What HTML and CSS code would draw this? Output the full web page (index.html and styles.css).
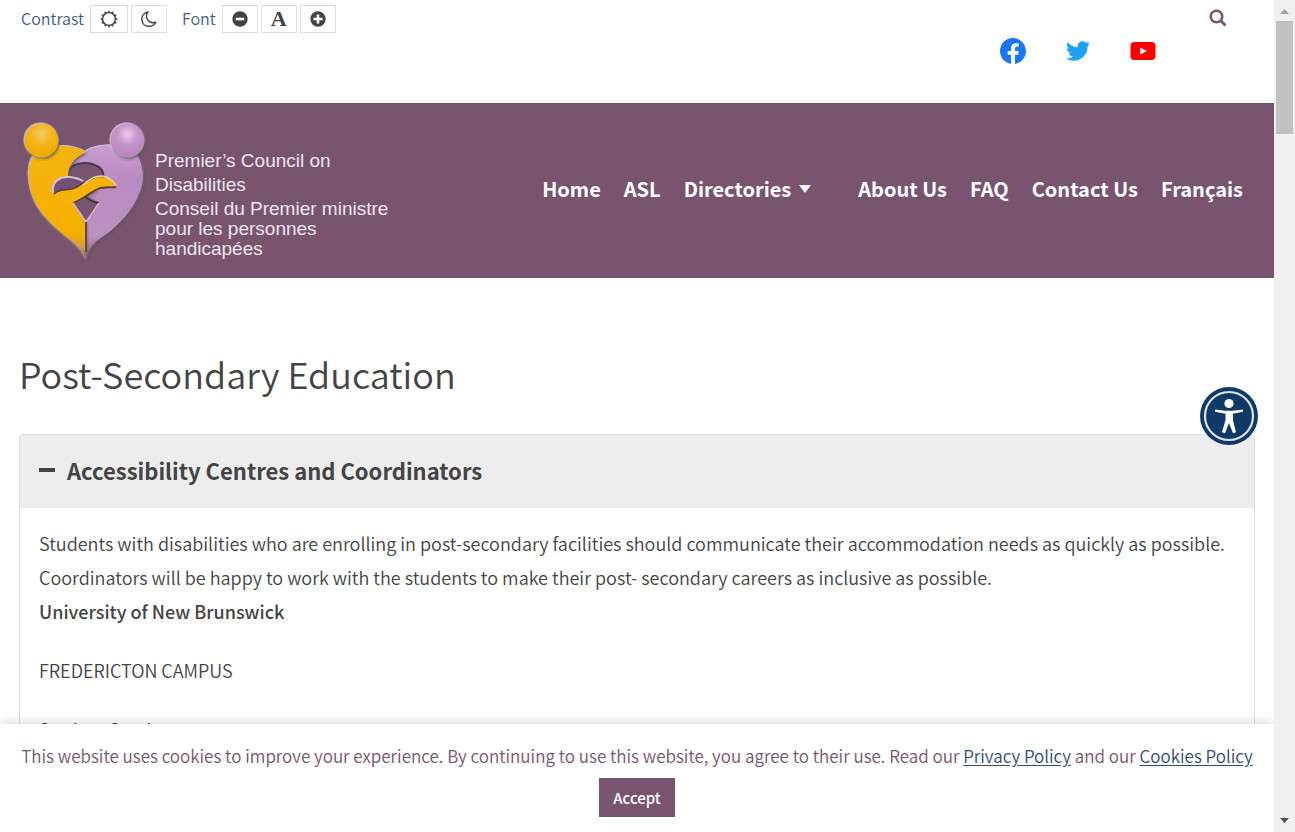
FILE: index.html
```html
<!DOCTYPE html>
<html lang="en">
<head>
<meta charset="utf-8">
<title>Post-Secondary Education</title>
<link rel="stylesheet" href="styles.css">
</head>
<body>
<div class="viewport">
  <div class="page">
    <div class="topbar">
      <div class="tools">
        <div class="tool-group">
          <span class="tool-label">Contrast</span>
          <button class="tool wide" type="button" aria-label="Day mode">
            <svg width="18" height="18" viewBox="0 0 18 18"><path d="M9 0L10.500 2.700H7.500ZM9 18L7.500 15.300H10.500ZM0 9L2.700 7.500V10.500ZM18 9L15.300 10.500V7.500ZM4.500 1.200L7.100 2.600L4.500 4.100ZM13.500 1.200L13.500 4.100L10.900 2.600ZM4.500 16.800L4.500 13.900L7.100 15.400ZM13.500 16.800L10.900 15.400L13.500 13.900ZM1.200 4.500L4.100 4.500L2.600 7.100ZM16.800 4.500L15.400 7.100L13.900 4.500ZM1.200 13.500L2.600 10.900L4.100 13.500ZM16.800 13.500L13.900 13.500L15.400 10.900Z" fill="#444"/><circle cx="9" cy="9" r="6.400" fill="none" stroke="#444" stroke-width="1.400"/></svg>
          </button>
          <button class="tool" type="button" aria-label="Night mode">
            <svg width="18" height="18" viewBox="0 0 18 18"><path d="M8 1.800C3.800 3 1.500 6 1.800 9.800C2.200 14 5.200 16.400 9 16.300C12 16.200 14.500 14.800 15.800 12.200C12 13.300 9.200 12.300 7.600 9.900C6 7.400 6.200 4.300 8 1.800Z" fill="none" stroke="#444" stroke-width="1.400" stroke-linejoin="round"/></svg>
          </button>
        </div>
        <div class="tool-group">
          <span class="tool-label">Font</span>
          <button class="tool" type="button" aria-label="Smaller font">
            <svg width="16" height="16" viewBox="0 0 16 16"><circle cx="8" cy="8" r="7.700" fill="#444"/><path d="M3.800 8h8.400" stroke="#fff" stroke-width="2.600"/></svg>
          </button>
          <button class="tool letter" type="button" aria-label="Default font">A</button>
          <button class="tool" type="button" aria-label="Larger font">
            <svg width="16" height="16" viewBox="0 0 16 16"><circle cx="8" cy="8" r="7.700" fill="#444"/><path d="M3.500 8h9M8 3.500v9" stroke="#fff" stroke-width="2.600"/></svg>
          </button>
        </div>
      </div>
      <div class="social">
        <a href="#" aria-label="Facebook"><svg width="26" height="26" viewBox="0 0 24 24"><path fill="#1877f2" d="M24 12.073c0-6.627-5.373-12-12-12s-12 5.373-12 12c0 5.990 4.388 10.954 10.125 11.854v-8.385H7.078v-3.470h3.047V9.430c0-3.007 1.792-4.669 4.533-4.669 1.312 0 2.686.235 2.686.235v2.953H15.830c-1.491 0-1.956.925-1.956 1.874v2.250h3.328l-.532 3.470h-2.796v8.385C19.612 23.027 24 18.062 24 12.073z"/></svg></a>
        <a href="#" aria-label="Twitter"><svg width="26" height="26" viewBox="0 0 26 26"><path transform="translate(1 1)" fill="#1da1f2" d="M23.953 4.570a10 10 0 01-2.825.775 4.958 4.958 0 002.163-2.723c-.951.555-2.005.959-3.127 1.184a4.920 4.920 0 00-8.384 4.482C7.690 8.095 4.067 6.130 1.640 3.162a4.822 4.822 0 00-.666 2.475c0 1.710.870 3.213 2.188 4.096a4.904 4.904 0 01-2.228-.616v.060a4.923 4.923 0 003.946 4.827 4.996 4.996 0 01-2.212.085 4.936 4.936 0 004.604 3.417 9.867 9.867 0 01-6.102 2.105c-.390 0-.779-.023-1.170-.067a13.995 13.995 0 007.557 2.209c9.053 0 13.998-7.496 13.998-13.985 0-.210 0-.420-.015-.630A9.935 9.935 0 0024 4.590z"/></svg></a>
        <a href="#" aria-label="YouTube"><svg width="26" height="26" viewBox="0 0 26 26"><rect x="0.500" y="4" width="25" height="18" rx="4" fill="#f00"/><path d="M10.300 9.500v7l6.500-3.500z" fill="#fff"/></svg></a>
      </div>
      <button class="search" type="button" aria-label="Search"><svg width="18" height="18" viewBox="0 0 18 18"><circle cx="7.500" cy="7.500" r="5.800" fill="none" stroke="#78546f" stroke-width="2.500"/><path d="M11.500 11.500l5 5" stroke="#78546f" stroke-width="2.800"/></svg></button>
    </div>

    <header class="header">
      <a class="brand" href="#">
        <svg class="brand-mark" width="128" height="142" viewBox="0 0 128 142" aria-hidden="true">
          <defs>
            <radialGradient id="gold" cx=".5" cy=".32" r=".6"><stop offset="0" stop-color="#f2cb62"/><stop offset=".6" stop-color="#f4b215"/><stop offset="1" stop-color="#efab00"/></radialGradient>
            <radialGradient id="lilac" cx=".5" cy=".32" r=".6"><stop offset="0" stop-color="#edcaf0"/><stop offset=".5" stop-color="#c396ca"/><stop offset="1" stop-color="#b889bd"/></radialGradient>
            <linearGradient id="goldBody" x1="0" y1="0" x2="0" y2="1"><stop offset="0" stop-color="#f5b40c"/><stop offset=".78" stop-color="#f4b002"/><stop offset=".9" stop-color="#cf9c45"/><stop offset="1" stop-color="#8d6272"/></linearGradient>
            <linearGradient id="lilacBody" x1="0" y1="0" x2="0" y2="1"><stop offset="0" stop-color="#c89cd0"/><stop offset=".3" stop-color="#b98ac0"/><stop offset=".8" stop-color="#bb92c1"/><stop offset="1" stop-color="#80597a"/></linearGradient>
            <filter id="rim" x="-10%" y="-10%" width="120%" height="120%"><feDropShadow dx="1" dy="1.500" stdDeviation=".8" flood-color="#342525" flood-opacity=".85"/><feDropShadow dx="-1" dy="-1" stdDeviation=".7" flood-color="#fff" flood-opacity=".6"/></filter>
          </defs>
          <path filter="url(#rim)" fill="url(#lilacBody)" d="M63 31C75 23 95 23 106 27C116 31 121 43 121 57C120 72 111 88 98 101C91 108 86 112 80 116C71 122 67 128 64 138V100L77 81L63 74L46 56C46 46 53 36 63 31Z"/>
          <path d="M46 57C45 47 52 42 64 42C77 43 83 50 81 57L72 64H50Z" fill="#78546f"/>
          <path d="M46 55C46 46 53 42 64 42C76 43 83 49 81 57" fill="none" stroke="#463848" stroke-width="2"/>
          <path filter="url(#rim)" fill="url(#goldBody)" d="M64 31C55 25 40 24 30 26L10 37C7 43 6 52 7 58C8 75 16 89 25 98C33 107 41 113 47 118C56 125 61 131 64 138V101L51 82C60 78 67 73 75 68L62 64L46 57C45 46 51 37 64 31Z"/>
          <path d="M31 72C29 61 38 55 48 56C54 57 59 58 63 62L48 69Z" fill="#754f78"/>
          <path d="M31 72C29 61 38 55 48 56C54 57 58 58 61 60" fill="none" stroke="#d5c3d7" stroke-width="2"/>
          <path d="M51 81C61 77 67 71 76 67C82 65 88 66 94 65C90 60 86 56 78 56C70 57 65 62 59 65C50 69 38 68 31 73C34 77 39 83 45 84Z" fill="#f4b20b"/>
          <path d="M61 64C69 57 73 55 79 55C86 55 91 60 94 64" stroke="#eed79c" stroke-width="1.500" fill="none"/>
          <path d="M32 73C37 68 42 69 50 68C55 67 58 64 61 62" stroke="#543c48" stroke-width="1.500" fill="none"/>
          <path d="M51 82C61 78 67 72 76 68C82 65 88 67 94 66" stroke="#60402b" stroke-width="1.800" fill="none"/>
          <path d="M51 82Q60 80 64 75Q68 81 77 81L64 101Z" fill="#78546f"/>
          <path d="M63 75Q68 81 77 82" stroke="#343237" fill="none" stroke-width="1.800"/>
          <path d="M51 82l13 19 13-19" stroke="#d7b6d4" stroke-width="1.500" fill="none"/>
          <path d="M64 101v30" stroke="#58483e" stroke-width="1.800"/>
          <circle filter="url(#rim)" cx="19.500" cy="19.500" r="17" fill="url(#gold)"/>
          <circle filter="url(#rim)" cx="105.500" cy="19.500" r="17" fill="url(#lilac)"/>
        </svg>
        <span class="brand-text">
          <span class="brand-en">Premier’s Council on<br>Disabilities</span>
          <span class="brand-fr">Conseil du Premier ministre<br>pour les personnes<br>handicapées</span>
        </span>
      </a>
      <nav class="nav">
        <a href="#">Home</a>
        <a href="#">ASL</a>
        <a class="has-menu" href="#">Directories<svg width="12" height="8" viewBox="0 0 12 8"><path d="M0 0h12L6 8z" fill="#fff"/></svg></a>
        <a href="#">About Us</a>
        <a href="#">FAQ</a>
        <a href="#">Contact Us</a>
        <a href="#">Français</a>
      </nav>
    </header>

    <main class="content">
      <h1 class="title">Post-Secondary Education</h1>
      <section class="panel">
        <h2 class="panel-head"><button class="panel-toggle" type="button" aria-expanded="true"><span class="minus"></span>Accessibility Centres and Coordinators</button></h2>
        <div class="panel-body">
          <p>Students with disabilities who are enrolling in post-secondary facilities should communicate their accommodation needs as quickly as possible. Coordinators will be happy to work with the students to make their post- secondary careers as inclusive as possible.<br><strong>University of New Brunswick</strong></p>
          <p>FREDERICTON CAMPUS</p>
          <p>Student Services</p>
        </div>
      </section>
    </main>

    <button class="access" type="button" aria-label="Accessibility options">
      <svg width="58" height="58" viewBox="0 0 58 58"><circle cx="29" cy="29" r="29" fill="#0f3966"/><circle cx="29" cy="29" r="24" fill="none" stroke="#dce3ea" stroke-width="2.200"/><circle cx="29" cy="16.500" r="4.600" fill="#fff"/><path d="M15 22.500l10 1.200h8L43 22.500v2.300l-10 2v6.500l3 12-3 1L29 36l-4 10.300-3-1L25.500 33v-6.200l-10.500-2z" fill="#fff"/></svg>
    </button>

    <div class="cookies">
      <p>This website uses cookies to improve your experience. By continuing to use this website, you agree to their use. Read our <a href="#">Privacy Policy</a> and our <a href="#">Cookies Policy</a></p>
      <button class="accept" type="button">Accept</button>
    </div>
  </div>

  <div class="scrollbar" aria-hidden="true">
    <svg width="21" height="21" viewBox="0 0 21 21"><path d="M6 14l4.500-5 4.500 5z" fill="#a3a3a3"/></svg>
    <span class="thumb"></span>
    <svg class="down" width="21" height="21" viewBox="0 0 21 21"><path d="M6 7h9l-4.500 5z" fill="#505050"/></svg>
  </div>
</div>
</body>
</html>
```
FILE: styles.css
```css
* { box-sizing: border-box; }

body {
  margin: 0;
  font-family: "Noto Sans CJK SC", "Noto Sans", sans-serif;
  font-size: 18px;
  font-weight: 350;
  line-height: 34px;
  color: #444;
  background: #fff;
}

button {
  font: inherit;
  color: inherit;
  padding: 0;
  border: 0;
  background: none;
}

a svg, button svg, .scrollbar svg { display: block; }

.viewport {
  display: flex;
  height: 100vh;
  overflow: hidden;
}

.page {
  position: relative;
  flex: 1;
  min-width: 0;
  overflow: hidden;
}

.topbar {
  display: flex;
  align-items: flex-start;
  padding: 5px 47px 0 21px;
  min-height: 103px;
}

.tools {
  display: flex;
  gap: 15px;
  margin-right: auto;
}

.tool-group {
  display: flex;
  gap: 3px;
  align-items: center;
  line-height: 26px;
}

.tool-label {
  align-self: flex-start;
  margin-right: 3px;
  font-size: 16px;
  color: #445a84;
}

.tool {
  display: flex;
  align-items: center;
  justify-content: center;
  width: 36px;
  height: 28px;
  border: 1px solid #ddd;
  background: #fff;
}

.wide { width: 38px; }

.letter {
  font-family: "Liberation Serif", serif;
  font-size: 22px;
  font-weight: 700;
}

.social {
  display: flex;
  gap: 39px;
  padding-top: 33px;
  margin-right: 53px;
}

.search { padding-top: 4px; }

.header {
  display: flex;
  align-items: flex-start;
  justify-content: space-between;
  padding: 18px 31px 15px 22px;
  min-height: 175px;
  background: #78546f;
}

.brand {
  display: flex;
  gap: 5px;
  color: #eee5ed;
  text-decoration: none;
}

.brand-text {
  padding-top: 28px;
  font-family: "Liberation Sans", Arial, sans-serif;
  font-size: 19px;
  white-space: nowrap;
}

.brand-en, .brand-fr { display: block; }
.brand-en { line-height: 24px; }
.brand-fr { line-height: 20px; padding-top: 2px; }

.nav {
  display: flex;
  gap: 23px;
  padding-top: 51px;
  font-size: 20px;
  font-weight: 700;
}

.nav a {
  color: #fff;
  text-decoration: none;
  white-space: nowrap;
}

.nav .has-menu {
  display: flex;
  align-items: center;
  gap: 8px;
  margin-right: 24px;
}

.content { padding: 65px 19px 0; }

.title {
  margin: 0 0 31px;
  font-size: 36px;
  font-weight: 350;
  line-height: 60px;
}

.panel {
  border: 1px solid #ddd;
  border-radius: 4px;
}

.panel-head {
  margin: 0;
  background: #ededed;
  font-size: 22px;
  font-weight: 700;
}

.panel-toggle {
  display: flex;
  align-items: center;
  gap: 12px;
  width: 100%;
  padding: 18px 19px 21px;
  text-align: left;
}

.minus {
  width: 16px;
  height: 4px;
  background: #444;
}

.panel-body { padding: 18px 15px 18px 19px; }
.panel-body p { margin: 0 0 25px; }
.panel-body strong { font-weight: 500; }

.access {
  position: absolute;
  top: 387px;
  right: 16px;
}

.cookies {
  position: absolute;
  left: 0;
  right: 0;
  bottom: 0;
  padding: 15px 12px;
  background: #fff;
  box-shadow: 0 -2px 10px rgba(0, 0, 0, .15);
  text-align: center;
  font-size: 17px;
  color: #78546f;
}

.cookies p { margin: 0 0 5px; }
.cookies a { color: #2f4d75; text-underline-offset: 2px; }

.accept {
  width: 76px;
  height: 39px;
  background: #78546f;
  color: #fff;
  font-size: 15px;
  font-weight: 500;
  line-height: 39px;
  vertical-align: top;
}

.scrollbar {
  display: flex;
  flex-direction: column;
  align-items: center;
  width: 21px;
  background: #f0f0f0;
}

.thumb {
  width: 17px;
  height: 113px;
  background: #c1c1c1;
}

.down { margin-top: auto; }
```
